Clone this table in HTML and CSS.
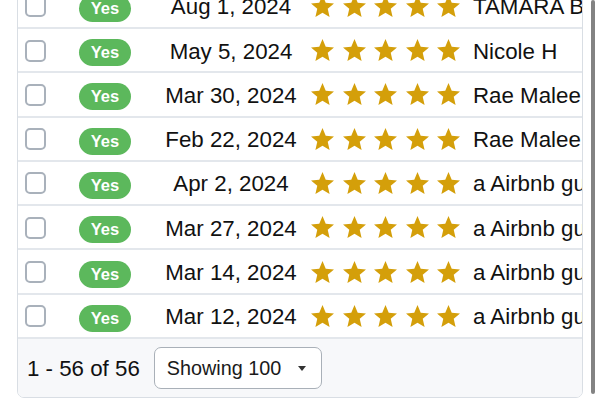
FILE: index.html
```html
<!DOCTYPE html>
<html>
<head>
<meta charset="utf-8">
<link rel="stylesheet" href="styles.css">
</head>
<body>
<div class="table">
  <div class="row"><span class="cb"></span><span class="c2"><span class="badge">Yes</span></span><span class="date">Aug 1, 2024</span><span class="stars"><svg viewBox="2 2 20 19"><path d="M12 17.27L18.18 21l-1.64-7.03L22 9.24l-7.19-.61L12 2 9.19 8.63 2 9.24l5.46 4.73L5.82 21z"/></svg><svg viewBox="2 2 20 19"><path d="M12 17.27L18.18 21l-1.64-7.03L22 9.24l-7.19-.61L12 2 9.19 8.63 2 9.24l5.46 4.73L5.82 21z"/></svg><svg viewBox="2 2 20 19"><path d="M12 17.27L18.18 21l-1.64-7.03L22 9.24l-7.19-.61L12 2 9.19 8.63 2 9.24l5.46 4.73L5.82 21z"/></svg><svg viewBox="2 2 20 19"><path d="M12 17.27L18.18 21l-1.64-7.03L22 9.24l-7.19-.61L12 2 9.19 8.63 2 9.24l5.46 4.73L5.82 21z"/></svg><svg viewBox="2 2 20 19"><path d="M12 17.27L18.18 21l-1.64-7.03L22 9.24l-7.19-.61L12 2 9.19 8.63 2 9.24l5.46 4.73L5.82 21z"/></svg></span><span class="name">TAMARA B</span></div>
  <div class="row"><span class="cb"></span><span class="c2"><span class="badge">Yes</span></span><span class="date">May 5, 2024</span><span class="stars"><svg viewBox="2 2 20 19"><path d="M12 17.27L18.18 21l-1.64-7.03L22 9.24l-7.19-.61L12 2 9.19 8.63 2 9.24l5.46 4.73L5.82 21z"/></svg><svg viewBox="2 2 20 19"><path d="M12 17.27L18.18 21l-1.64-7.03L22 9.24l-7.19-.61L12 2 9.19 8.63 2 9.24l5.46 4.73L5.82 21z"/></svg><svg viewBox="2 2 20 19"><path d="M12 17.27L18.18 21l-1.64-7.03L22 9.24l-7.19-.61L12 2 9.19 8.63 2 9.24l5.46 4.73L5.82 21z"/></svg><svg viewBox="2 2 20 19"><path d="M12 17.27L18.18 21l-1.64-7.03L22 9.24l-7.19-.61L12 2 9.19 8.63 2 9.24l5.46 4.73L5.82 21z"/></svg><svg viewBox="2 2 20 19"><path d="M12 17.27L18.18 21l-1.64-7.03L22 9.24l-7.19-.61L12 2 9.19 8.63 2 9.24l5.46 4.73L5.82 21z"/></svg></span><span class="name">Nicole H</span></div>
  <div class="row"><span class="cb"></span><span class="c2"><span class="badge">Yes</span></span><span class="date">Mar 30, 2024</span><span class="stars"><svg viewBox="2 2 20 19"><path d="M12 17.27L18.18 21l-1.64-7.03L22 9.24l-7.19-.61L12 2 9.19 8.63 2 9.24l5.46 4.73L5.82 21z"/></svg><svg viewBox="2 2 20 19"><path d="M12 17.27L18.18 21l-1.64-7.03L22 9.24l-7.19-.61L12 2 9.19 8.63 2 9.24l5.46 4.73L5.82 21z"/></svg><svg viewBox="2 2 20 19"><path d="M12 17.27L18.18 21l-1.64-7.03L22 9.24l-7.19-.61L12 2 9.19 8.63 2 9.24l5.46 4.73L5.82 21z"/></svg><svg viewBox="2 2 20 19"><path d="M12 17.27L18.18 21l-1.64-7.03L22 9.24l-7.19-.61L12 2 9.19 8.63 2 9.24l5.46 4.73L5.82 21z"/></svg><svg viewBox="2 2 20 19"><path d="M12 17.27L18.18 21l-1.64-7.03L22 9.24l-7.19-.61L12 2 9.19 8.63 2 9.24l5.46 4.73L5.82 21z"/></svg></span><span class="name">Rae Malee</span></div>
  <div class="row"><span class="cb"></span><span class="c2"><span class="badge">Yes</span></span><span class="date">Feb 22, 2024</span><span class="stars"><svg viewBox="2 2 20 19"><path d="M12 17.27L18.18 21l-1.64-7.03L22 9.24l-7.19-.61L12 2 9.19 8.63 2 9.24l5.46 4.73L5.82 21z"/></svg><svg viewBox="2 2 20 19"><path d="M12 17.27L18.18 21l-1.64-7.03L22 9.24l-7.19-.61L12 2 9.19 8.63 2 9.24l5.46 4.73L5.82 21z"/></svg><svg viewBox="2 2 20 19"><path d="M12 17.27L18.18 21l-1.64-7.03L22 9.24l-7.19-.61L12 2 9.19 8.63 2 9.24l5.46 4.73L5.82 21z"/></svg><svg viewBox="2 2 20 19"><path d="M12 17.27L18.18 21l-1.64-7.03L22 9.24l-7.19-.61L12 2 9.19 8.63 2 9.24l5.46 4.73L5.82 21z"/></svg><svg viewBox="2 2 20 19"><path d="M12 17.27L18.18 21l-1.64-7.03L22 9.24l-7.19-.61L12 2 9.19 8.63 2 9.24l5.46 4.73L5.82 21z"/></svg></span><span class="name">Rae Malee</span></div>
  <div class="row"><span class="cb"></span><span class="c2"><span class="badge">Yes</span></span><span class="date">Apr 2, 2024</span><span class="stars"><svg viewBox="2 2 20 19"><path d="M12 17.27L18.18 21l-1.64-7.03L22 9.24l-7.19-.61L12 2 9.19 8.63 2 9.24l5.46 4.73L5.82 21z"/></svg><svg viewBox="2 2 20 19"><path d="M12 17.27L18.18 21l-1.64-7.03L22 9.24l-7.19-.61L12 2 9.19 8.63 2 9.24l5.46 4.73L5.82 21z"/></svg><svg viewBox="2 2 20 19"><path d="M12 17.27L18.18 21l-1.64-7.03L22 9.24l-7.19-.61L12 2 9.19 8.63 2 9.24l5.46 4.73L5.82 21z"/></svg><svg viewBox="2 2 20 19"><path d="M12 17.27L18.18 21l-1.64-7.03L22 9.24l-7.19-.61L12 2 9.19 8.63 2 9.24l5.46 4.73L5.82 21z"/></svg><svg viewBox="2 2 20 19"><path d="M12 17.27L18.18 21l-1.64-7.03L22 9.24l-7.19-.61L12 2 9.19 8.63 2 9.24l5.46 4.73L5.82 21z"/></svg></span><span class="name">a Airbnb guest</span></div>
  <div class="row"><span class="cb"></span><span class="c2"><span class="badge">Yes</span></span><span class="date">Mar 27, 2024</span><span class="stars"><svg viewBox="2 2 20 19"><path d="M12 17.27L18.18 21l-1.64-7.03L22 9.24l-7.19-.61L12 2 9.19 8.63 2 9.24l5.46 4.73L5.82 21z"/></svg><svg viewBox="2 2 20 19"><path d="M12 17.27L18.18 21l-1.64-7.03L22 9.24l-7.19-.61L12 2 9.19 8.63 2 9.24l5.46 4.73L5.82 21z"/></svg><svg viewBox="2 2 20 19"><path d="M12 17.27L18.18 21l-1.64-7.03L22 9.24l-7.19-.61L12 2 9.19 8.63 2 9.24l5.46 4.73L5.82 21z"/></svg><svg viewBox="2 2 20 19"><path d="M12 17.27L18.18 21l-1.64-7.03L22 9.24l-7.19-.61L12 2 9.19 8.63 2 9.24l5.46 4.73L5.82 21z"/></svg><svg viewBox="2 2 20 19"><path d="M12 17.27L18.18 21l-1.64-7.03L22 9.24l-7.19-.61L12 2 9.19 8.63 2 9.24l5.46 4.73L5.82 21z"/></svg></span><span class="name">a Airbnb guest</span></div>
  <div class="row"><span class="cb"></span><span class="c2"><span class="badge">Yes</span></span><span class="date">Mar 14, 2024</span><span class="stars"><svg viewBox="2 2 20 19"><path d="M12 17.27L18.18 21l-1.64-7.03L22 9.24l-7.19-.61L12 2 9.19 8.63 2 9.24l5.46 4.73L5.82 21z"/></svg><svg viewBox="2 2 20 19"><path d="M12 17.27L18.18 21l-1.64-7.03L22 9.24l-7.19-.61L12 2 9.19 8.63 2 9.24l5.46 4.73L5.82 21z"/></svg><svg viewBox="2 2 20 19"><path d="M12 17.27L18.18 21l-1.64-7.03L22 9.24l-7.19-.61L12 2 9.19 8.63 2 9.24l5.46 4.73L5.82 21z"/></svg><svg viewBox="2 2 20 19"><path d="M12 17.27L18.18 21l-1.64-7.03L22 9.24l-7.19-.61L12 2 9.19 8.63 2 9.24l5.46 4.73L5.82 21z"/></svg><svg viewBox="2 2 20 19"><path d="M12 17.27L18.18 21l-1.64-7.03L22 9.24l-7.19-.61L12 2 9.19 8.63 2 9.24l5.46 4.73L5.82 21z"/></svg></span><span class="name">a Airbnb guest</span></div>
  <div class="row"><span class="cb"></span><span class="c2"><span class="badge">Yes</span></span><span class="date">Mar 12, 2024</span><span class="stars"><svg viewBox="2 2 20 19"><path d="M12 17.27L18.18 21l-1.64-7.03L22 9.24l-7.19-.61L12 2 9.19 8.63 2 9.24l5.46 4.73L5.82 21z"/></svg><svg viewBox="2 2 20 19"><path d="M12 17.27L18.18 21l-1.64-7.03L22 9.24l-7.19-.61L12 2 9.19 8.63 2 9.24l5.46 4.73L5.82 21z"/></svg><svg viewBox="2 2 20 19"><path d="M12 17.27L18.18 21l-1.64-7.03L22 9.24l-7.19-.61L12 2 9.19 8.63 2 9.24l5.46 4.73L5.82 21z"/></svg><svg viewBox="2 2 20 19"><path d="M12 17.27L18.18 21l-1.64-7.03L22 9.24l-7.19-.61L12 2 9.19 8.63 2 9.24l5.46 4.73L5.82 21z"/></svg><svg viewBox="2 2 20 19"><path d="M12 17.27L18.18 21l-1.64-7.03L22 9.24l-7.19-.61L12 2 9.19 8.63 2 9.24l5.46 4.73L5.82 21z"/></svg></span><span class="name">a Airbnb guest</span></div>
  <div class="footer">
    <span class="count">1 - 56 of 56</span>
    <span class="select">Showing 100<span class="caret"></span></span>
  </div>
</div>
<div class="scrollbar"></div>
</body>
</html>
```

FILE: styles.css
```css
html, body {
  margin: 0;
  padding: 0;
  background: #ffffff;
  overflow: hidden;
}
body {
  font-family: "Liberation Sans", Arial, sans-serif;
  color: #111111;
}
.table {
  margin: -16.3px 0 0 17px;
  width: 566px;
  box-sizing: border-box;
  border: 1px solid #d9dee4;
  border-radius: 0 0 7px 7px;
  overflow: hidden;
  background: #ffffff;
}
.row {
  display: flex;
  align-items: center;
  height: 44.29px;
  box-sizing: border-box;
  border-bottom: 2px solid #e3e7ec;
  white-space: nowrap;
  font-size: 22.3px;
}
.cb {
  flex: none;
  width: 21px;
  height: 22px;
  box-sizing: border-box;
  margin: 1px 18px 0 7px;
  border: 2px solid #a9b1bb;
  border-radius: 5px;
  background: #fff;
}
.c2 {
  flex: none;
  width: 82px;
  display: flex;
  justify-content: center;
}
.badge {
  margin-top: 5px;
  width: 52px;
  height: 27px;
  border-radius: 14px;
  background: #5cb85c;
  color: #ffffff;
  font-weight: bold;
  font-size: 16.5px;
  line-height: 27px;
  text-align: center;
}
.date {
  flex: none;
  width: 162px;
  box-sizing: border-box;
  padding: 3px 0 0 8px;
  text-align: center;
}
.stars {
  flex: none;
  display: flex;
  gap: 8.5px;
  padding-left: 3px;
  fill: #d49f0a;
}
.stars svg {
  width: 23px;
  height: 22px;
  display: block;
}
.name {
  margin-left: 13px;
  padding-top: 3px;
}
.footer {
  display: flex;
  align-items: center;
  height: 58px;
  padding-left: 9px;
  background: #f7f8fa;
  font-size: 22.3px;
}
.count {
  padding-top: 2px;
}
.select {
  margin-left: 14px;
  width: 168px;
  height: 42px;
  box-sizing: border-box;
  border: 1.5px solid #a9b0b8;
  border-radius: 7px;
  background: #ffffff;
  display: flex;
  align-items: center;
  padding: 2px 15px 0 12px;
  font-size: 19.8px;
  color: #1a1a1a;
}
.caret {
  margin-left: auto;
  width: 0;
  height: 0;
  border-left: 4.5px solid transparent;
  border-right: 4.5px solid transparent;
  border-top: 5px solid #333333;
}
.scrollbar {
  position: absolute;
  top: 0;
  left: 591px;
  width: 4px;
  height: 394px;
  border-radius: 2px;
  background: #838383;
}
```
